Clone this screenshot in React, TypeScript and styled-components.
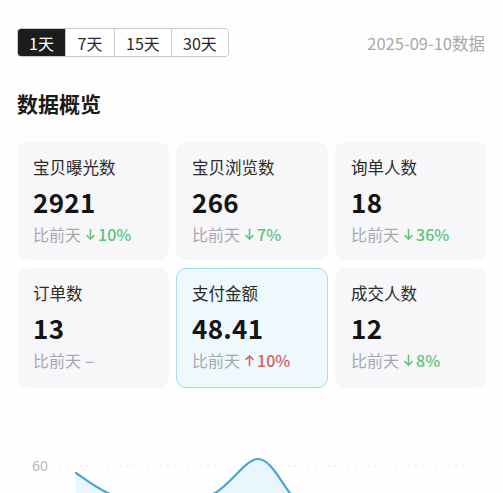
import React from "react";
import styled, { createGlobalStyle } from "styled-components";

const Global = createGlobalStyle`
  html, body { margin: 0; padding: 0; background: #fefefe; }
  body { font-family: "Noto Sans CJK SC", "Noto Sans", sans-serif; overflow: hidden; }
  * { box-sizing: border-box; }
`;

const Page = styled.div`
  width: 503px;
  height: 493px;
  padding: 28px 16px 0 17px;
  overflow: hidden;
`;

const Header = styled.div`
  display: flex;
  align-items: center;
  justify-content: space-between;
  height: 29px;
`;

const Segmented = styled.div`
  display: flex;
  height: 29px;
  border: 1px solid #c9c9cc;
  border-radius: 4px;
  overflow: hidden;
`;

const Seg = styled.div<{ $active?: boolean; $w: number }>`
  display: flex;
  align-items: center;
  justify-content: center;
  width: ${(p) => p.$w}px;
  font-size: 16px;
  color: ${(p) => (p.$active ? "#fff" : "#2a2a2a")};
  background: ${(p) => (p.$active ? "#1c1c1e" : "#fff")};
  & + & { border-left: 1px solid #c9c9cc; }
`;

const DateText = styled.div`
  font-size: 16.5px;
  color: #a7a6ad;
  margin-right: 2px;
`;

const Title = styled.div`
  margin-top: 32px;
  font-size: 21px;
  font-weight: 700;
  color: #1a1a1a;
  line-height: 28px;
`;

const Grid = styled.div`
  margin-top: 25px;
  display: grid;
  grid-template-columns: repeat(3, 152px);
  column-gap: 7px;
  row-gap: 8px;
`;

const Card = styled.div<{ $active?: boolean; $h: number }>`
  height: ${(p) => p.$h}px;
  border-radius: 10px;
  padding: ${(p) => (p.$active ? "13px 15px" : "14px 16px")};
  background: ${(p) => (p.$active ? "#eef9fd" : "#f7f6f9")};
  border: ${(p) => (p.$active ? "1px solid #a6dcec" : "none")};
  display: flex;
  flex-direction: column;
`;

const Label = styled.div`
  font-size: 16.5px;
  line-height: 22px;
  color: #2b2b2b;
`;

const Value = styled.div`
  margin-top: 8px;
  font-size: 26px;
  font-weight: 700;
  line-height: 32px;
  color: #141414;
  letter-spacing: 0.3px;
`;

const Sub = styled.div`
  margin-top: 5px;
  font-size: 16px;
  line-height: 22px;
  color: #a9a8ae;
  display: flex;
  align-items: center;
`;

const Change = styled.span<{ $dir: "up" | "down" | "flat" }>`
  margin-left: 4px;
  display: inline-flex;
  align-items: center;
  color: ${(p) => (p.$dir === "up" ? "#d95c5c" : p.$dir === "down" ? "#5cc47a" : "#a9a8ae")};
  font-weight: 500;
`;

const ChartWrap = styled.div`
  margin-top: 52px;
  height: 60px;
`;

type Dir = "up" | "down" | "flat";

const Arrow = ({ dir }: { dir: Dir }) => (
  <svg width="11" height="13" viewBox="0 0 11 13" style={{ marginRight: 2 }}>
    {dir === "down" ? (
      <g stroke="currentColor" strokeWidth="1.5" fill="none" strokeLinecap="round" strokeLinejoin="round">
        <path d="M5.5 1.5 V11" />
        <path d="M2 7.6 L5.5 11 L9 7.6" />
      </g>
    ) : (
      <g stroke="currentColor" strokeWidth="1.5" fill="none" strokeLinecap="round" strokeLinejoin="round">
        <path d="M5.5 11.5 V2" />
        <path d="M2 5.4 L5.5 2 L9 5.4" />
      </g>
    )}
  </svg>
);

const items: { label: string; value: string; dir: Dir; pct: string; active?: boolean }[] = [
  { label: "宝贝曝光数", value: "2921", dir: "down", pct: "10%" },
  { label: "宝贝浏览数", value: "266", dir: "down", pct: "7%" },
  { label: "询单人数", value: "18", dir: "down", pct: "36%" },
  { label: "订单数", value: "13", dir: "flat", pct: "–" },
  { label: "支付金额", value: "48.41", dir: "up", pct: "10%", active: true },
  { label: "成交人数", value: "12", dir: "down", pct: "8%" },
];

function smoothPath(pts: [number, number][]) {
  let d = `M${pts[0][0]},${pts[0][1]}`;
  for (let i = 0; i < pts.length - 1; i++) {
    const p0 = pts[i - 1] || pts[i];
    const p1 = pts[i];
    const p2 = pts[i + 1];
    const p3 = pts[i + 2] || p2;
    const t = 1 / 6;
    const c1x = p1[0] + (p2[0] - p0[0]) * t;
    const c1y = p1[1] + (p2[1] - p0[1]) * t;
    const c2x = p2[0] - (p3[0] - p1[0]) * t;
    const c2y = p2[1] - (p3[1] - p1[1]) * t;
    d += ` C${c1x.toFixed(1)},${c1y.toFixed(1)} ${c2x.toFixed(1)},${c2y.toFixed(1)} ${p2[0]},${p2[1]}`;
  }
  return d;
}

const Chart = () => {
  const pts: [number, number][] = [
    [59, 33],
    [91, 53],
    [145, 72],
    [198, 53],
    [241, 19],
    [273, 53],
    [295, 85],
  ];
  const line = smoothPath(pts);
  const area = `${line} L295,120 L59,120 Z`;
  return (
    <svg width="470" height="60" viewBox="0 0 470 60">
      <text x="15" y="31" fontSize="14" fill="#b9b8be" fontFamily="Noto Sans, sans-serif">60</text>
      <line x1="43" y1="26" x2="451" y2="26" stroke="#dedde4" strokeWidth="1.2" strokeDasharray="1.5 5.2" />
      <path d={area} fill="#eaf6fd" />
      <path d={line} fill="none" stroke="#45a7d6" strokeWidth="2.2" strokeLinecap="round" />
    </svg>
  );
};

export default function App() {
  return (
    <>
      <Global />
      <Page>
        <Header>
          <Segmented>
            <Seg $active $w={47}>1天</Seg>
            <Seg $w={49}>7天</Seg>
            <Seg $w={57}>15天</Seg>
            <Seg $w={57}>30天</Seg>
          </Segmented>
          <DateText>2025-09-10数据</DateText>
        </Header>
        <Title>数据概览</Title>
        <Grid>
          {items.map((it, i) => (
            <Card key={it.label} $active={it.active} $h={i >= 3 ? 120 : 118}>
              <Label>{it.label}</Label>
              <Value>{it.value}</Value>
              <Sub>
                比前天
                <Change $dir={it.dir}>
                  {it.dir !== "flat" && <Arrow dir={it.dir} />}
                  {it.pct}
                </Change>
              </Sub>
            </Card>
          ))}
        </Grid>
        <ChartWrap>
          <Chart />
        </ChartWrap>
      </Page>
    </>
  );
}
